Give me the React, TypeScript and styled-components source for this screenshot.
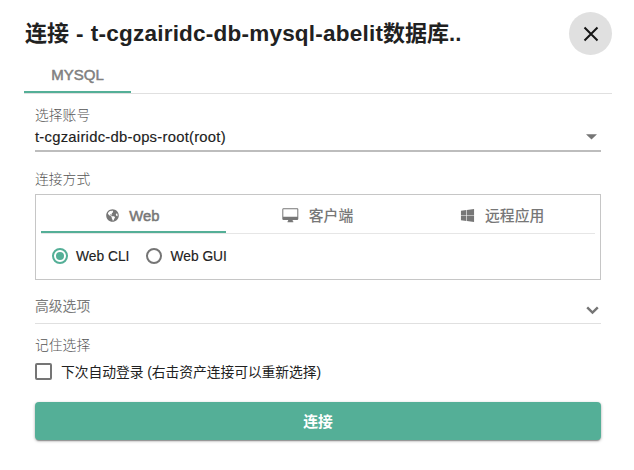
import React from 'react';
import styled, { createGlobalStyle } from 'styled-components';
import { FaGlobeAmericas, FaWindows } from 'react-icons/fa';

const GREEN = '#54af97';

const GlobalStyle = createGlobalStyle`
  * { box-sizing: border-box; }
  body {
    margin: 0;
    background: #fff;
    color: #212121;
    font-family: "Liberation Sans", "Noto Sans CJK SC", sans-serif;
  }
  button { font-family: inherit; cursor: pointer; }
`;

const Dialog = styled.main`
  width: 634px;
  height: 470px;
  padding: 12px 22px 0 24px;
  overflow: hidden;
  background: #fff;
`;

const Header = styled.header`
  display: flex;
  justify-content: space-between;
  height: 44px;
`;

const Title = styled.h1`
  margin: 0;
  padding-left: 1px;
  font-size: 22px;
  line-height: 44px;
  font-weight: 700;
  white-space: nowrap;
`;

const AssetName = styled.span`
  font-size: 22.5px;
  letter-spacing: 0.22px;
  word-spacing: 0.6px;
`;

const CloseButton = styled.button`
  display: flex;
  align-items: center;
  justify-content: center;
  width: 43px;
  height: 43px;
  padding: 1px 0 0;
  border: 0;
  border-radius: 50%;
  background: #e0e0e0;
`;

const Tabs = styled.nav`
  display: flex;
  height: 38px;
  border-bottom: 1px solid #e0e0e0;
`;

const Tab = styled.button`
  width: 107px;
  height: 37px;
  padding: 1px 0 0;
  border: 0;
  border-bottom: 2px solid ${GREEN};
  background: none;
  color: #808080;
  font-size: 15px;
  -webkit-text-stroke: 0.5px #808080;
`;

const Form = styled.form`
  display: flex;
  flex-direction: column;
  padding: 12px 11px 0;
`;

const Label = styled.div<{ $light?: boolean }>`
  height: 20px;
  font-size: 13.8px;
  line-height: 20px;
  font-weight: ${(p) => (p.$light ? 300 : 400)};
  color: ${(p) => (p.$light ? '#555' : '#7a7a7a')};
`;

const Select = styled.div`
  display: flex;
  justify-content: space-between;
  align-items: center;
  height: 26px;
  padding: 0 4px 3px 0;
  border-bottom: 2px solid #bdbdbd;
  font-size: 14.8px;
  letter-spacing: 0.26px;
  -webkit-text-stroke: 0.15px #212121;
`;

const Methods = styled.section`
  height: 86px;
  margin: 4px 0 17px;
  padding: 0 5px;
  border: 1px solid #c6c6c6;
`;

const MethodTabs = styled.div`
  display: grid;
  grid-template-columns: repeat(3, 1fr);
  height: 39px;
  border-bottom: 1px solid #e6e6e6;
`;

const MethodTab = styled.button<{ $active?: boolean; $gap: number }>`
  display: flex;
  align-items: center;
  justify-content: center;
  gap: ${(p) => p.$gap}px;
  height: 38px;
  padding: 5px 1px 0 0;
  border: 0;
  border-bottom: 2px solid ${(p) => (p.$active ? GREEN : 'transparent')};
  background: none;
  color: #777;
  font-size: 14.8px;
  line-height: 22px;
  font-weight: 500;
`;

const Latin = styled.span`
  -webkit-text-stroke: 0.5px #777;
`;

const Options = styled.div`
  display: flex;
  gap: 17px;
  padding: 12px 0 0 11px;
`;

const Option = styled.label`
  display: flex;
  align-items: center;
  gap: 8px;
  height: 20px;
  font-size: 13.8px;
  -webkit-text-stroke: 0.15px #212121;
`;

const RadioMark = styled.span<{ $on?: boolean }>`
  width: 16px;
  height: 16px;
  border: 2px solid ${(p) => (p.$on ? GREEN : '#757575')};
  border-radius: 50%;
  padding: 2px;
  background: ${(p) => (p.$on ? GREEN : 'transparent')} content-box;
`;

const Advanced = styled.div`
  display: flex;
  justify-content: space-between;
  height: 27px;
  padding-right: 2px;
  border-bottom: 1px solid #e0e0e0;
  svg { margin-top: 9px; }
`;

const Remember = styled.label`
  display: flex;
  align-items: center;
  gap: 9px;
  height: 20px;
  font-size: 13.8px;
  letter-spacing: -0.06px;
  white-space: nowrap;
`;

const CheckMark = styled.span`
  width: 17px;
  height: 17px;
  border: 2px solid #757575;
  border-radius: 2px;
`;

const Connect = styled.button`
  height: 38px;
  margin-top: 21px;
  padding: 0 0 2px;
  border: 0;
  border-radius: 4px;
  background: ${GREEN};
  box-shadow: 0 2px 1px -1px rgba(0, 0, 0, 0.25), 0 1px 3px rgba(0, 0, 0, 0.35);
  color: #fff;
  font-size: 14.8px;
  font-weight: 700;
`;

const Spacer = styled.div<{ $h: number }>`
  height: ${(p) => p.$h}px;
`;

const CloseIcon = () => (
  <svg width="16" height="16" viewBox="0 0 16 16" fill="none" stroke="#151515" strokeWidth="2">
    <path d="M1.5 1.5 14.5 14.5M14.5 1.5 1.5 14.5" />
  </svg>
);

const DesktopIcon = () => (
  <svg width="17" height="15" viewBox="0 0 17 15">
    <path
      fill="#777"
      fillRule="evenodd"
      d="M1.5.3h13.8a1 1 0 0 1 1 1v9.5a1.2 1.2 0 0 1-1.2 1.2h-4.4v1.2h.6v1H5.5v-1h.6V12H1.5A1.2 1.2 0 0 1 .3 10.800V1.500A1.200 1.200 0 0 1 1.500.3ZM1.300 1.300v7.400h14V1.300Z"
    />
  </svg>
);

const ArrowIcon = () => (
  <svg width="11" height="6" viewBox="0 0 11 6">
    <path d="M0 .3h11L5.500 5.600Z" fill="#757575" />
  </svg>
);

const ChevronIcon = () => (
  <svg width="13" height="9" viewBox="0 0 13 9" fill="none" stroke="#757575" strokeWidth="2.4">
    <path d="M1.200 1.300 6.500 6.600 11.800 1.300" />
  </svg>
);

export default function App() {
  return (
    <>
      <GlobalStyle />
      <Dialog>
        <Header>
          <Title>连接<AssetName> - t-cgzairidc-db-mysql-abelit</AssetName>数据库..</Title>
          <CloseButton aria-label="关闭"><CloseIcon /></CloseButton>
        </Header>
        <Tabs><Tab>MYSQL</Tab></Tabs>
        <Form>
          <Label $light>选择账号</Label>
          <Select>t-cgzairidc-db-ops-root(root)<ArrowIcon /></Select>
          <Spacer $h={18} />
          <Label $light>连接方式</Label>
          <Methods>
            <MethodTabs>
              <MethodTab type="button" $active $gap={10}>
                <FaGlobeAmericas size={13} /><Latin>Web</Latin>
              </MethodTab>
              <MethodTab type="button" $gap={10}><DesktopIcon />客户端</MethodTab>
              <MethodTab type="button" $gap={10}><FaWindows size={15} />远程应用</MethodTab>
            </MethodTabs>
            <Options>
              <Option><RadioMark $on />Web CLI</Option>
              <Option><RadioMark />Web GUI</Option>
            </Options>
          </Methods>
          <Advanced><Label>高级选项</Label><ChevronIcon /></Advanced>
          <Spacer $h={12} />
          <Label $light>记住选择</Label>
          <Spacer $h={5} />
          <Remember><CheckMark />下次自动登录 (右击资产连接可以重新选择)</Remember>
          <Connect type="button">连接</Connect>
        </Form>
      </Dialog>
    </>
  );
}
